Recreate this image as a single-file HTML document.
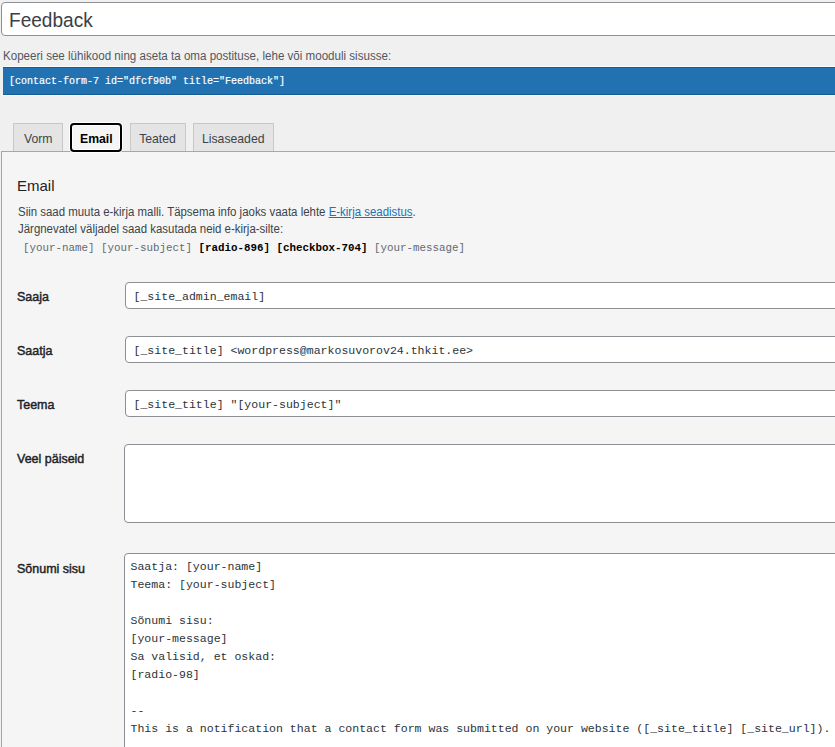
<!DOCTYPE html>
<html><head><meta charset="utf-8">
<style>
html,body{margin:0;padding:0;}
body{width:835px;height:747px;overflow:hidden;position:relative;background:#f0f0f1;font-family:"Liberation Sans",sans-serif;color:#3c434a;}
.a{position:absolute;white-space:pre;}
.mono{font-family:"Liberation Mono",monospace;}
#title{left:1px;top:2px;width:900px;height:34px;box-sizing:border-box;border:1px solid #8c8f94;border-radius:4px;background:#fff;}
#title-t{left:9px;top:8px;font-size:20.5px;line-height:24px;color:#3a4046;transform:scaleX(0.93);transform-origin:0 0;}
#kop{left:3px;top:48px;font-size:12px;line-height:16px;color:#50575e;transform:scaleX(0.965);transform-origin:0 0;}
#sc{left:3px;top:67px;width:900px;height:28px;box-sizing:border-box;background:#2271b1;border-top:1px solid #135e96;border-bottom:1px solid #135e96;}
#sc-t{left:9px;top:75px;font-size:10px;line-height:14px;color:#fff;-webkit-text-stroke:0.2px #fff;}
.tab{top:123px;height:28px;box-sizing:border-box;border:1px solid #c8c8c8;border-bottom:none;background:#e4e4e4;font-size:13px;line-height:30px;text-align:center;color:#3c434a;}
.tab span,#etab span{display:inline-block;transform:scaleX(0.94);}
#panel{left:1px;top:151px;width:900px;height:700px;box-sizing:border-box;border:1px solid #a7a7a7;background:#f5f5f5;}
#etab{left:70px;top:123px;width:52px;height:29px;box-sizing:border-box;border:2px solid #000;border-radius:4px;background:#f5f5f5;font-size:13px;line-height:28px;text-align:center;color:#000;font-weight:bold;box-shadow:0 0 0 1px #fff, inset 0 0 0 1px #fff;}
#h2{left:17px;top:177px;font-size:15px;line-height:18px;color:#1d2327;}
.desc{left:18px;font-size:12px;line-height:16px;color:#3c434a;transform:scaleX(0.953);transform-origin:0 0;}
.desc a{color:#2271b1;text-decoration:underline;}
#tags{left:23px;top:241px;font-size:10.84px;line-height:14px;color:#646970;}
#tags b{color:#000;}
.lbl{left:17px;font-size:13px;line-height:16px;font-weight:normal;-webkit-text-stroke:0.45px #1d2327;color:#1d2327;transform:scaleX(0.96);transform-origin:0 0;}
.inp{left:125px;width:800px;height:27px;box-sizing:border-box;border:1px solid #8c8f94;border-radius:4px;background:#fff;}
.inp-t{left:133.5px;font-size:11.55px;line-height:18px;color:#2c3338;}
.ta{left:124px;width:800px;box-sizing:border-box;border:1px solid #8c8f94;border-radius:4px;background:#fff;}
</style></head><body>
<div class="a" id="title"></div>
<div class="a" id="title-t">Feedback</div>
<div class="a" id="kop">Kopeeri see lühikood ning aseta ta oma postituse, lehe või mooduli sisusse:</div>
<div class="a" style="left:3px;top:66px;width:900px;height:1px;background:#fbfbfb;"></div>
<div class="a" style="left:3px;top:95px;width:900px;height:1px;background:#fbfbfb;"></div>
<div class="a" id="sc"></div>
<div class="a mono" id="sc-t">[contact-form-7 id="dfcf90b" title="Feedback"]</div>

<div class="a" id="panel"></div>
<div class="a tab" style="left:13px;width:50px;"><span>Vorm</span></div>
<div class="a" id="etab"><span>Email</span></div>
<div class="a tab" style="left:130px;width:56px;"><span>Teated</span></div>
<div class="a tab" style="left:193px;width:81px;"><span>Lisaseaded</span></div>

<div class="a" id="h2">Email</div>
<div class="a desc" style="top:204px;">Siin saad muuta e-kirja malli. Täpsema info jaoks vaata lehte <a>E-kirja seadistus</a>.</div>
<div class="a desc" style="top:221px;">Järgnevatel väljadel saad kasutada neid e-kirja-silte:</div>
<div class="a mono" id="tags">[your-name] [your-subject] <b>[radio-896]</b> <b>[checkbox-704]</b> [your-message]</div>

<div class="a lbl" style="top:289px;">Saaja</div>
<div class="a inp" style="top:282px;"></div>
<div class="a mono inp-t" style="top:288px;">[_site_admin_email]</div>

<div class="a lbl" style="top:343px;">Saatja</div>
<div class="a inp" style="top:336px;"></div>
<div class="a mono inp-t" style="top:342px;">[_site_title] &lt;wordpress@markosuvorov24.thkit.ee&gt;</div>

<div class="a lbl" style="top:397px;">Teema</div>
<div class="a inp" style="top:390px;"></div>
<div class="a mono inp-t" style="top:396px;">[_site_title] "[your-subject]"</div>

<div class="a lbl" style="top:451px;">Veel päiseid</div>
<div class="a ta" style="top:444px;height:79px;"></div>

<div class="a lbl" style="top:561px;">Sõnumi sisu</div>
<div class="a ta" style="top:553px;height:300px;"></div>
<div class="a mono inp-t" style="left:130.5px;top:558px;">Saatja: [your-name]
Teema: [your-subject]

Sõnumi sisu:
[your-message]
Sa valisid, et oskad:
[radio-98]

--
This is a notification that a contact form was submitted on your website ([_site_title] [_site_url]).</div>
</body></html>
